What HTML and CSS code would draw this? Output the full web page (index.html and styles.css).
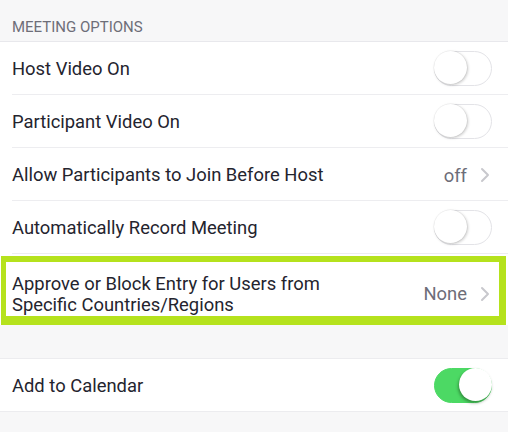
FILE: index.html
```html
<!DOCTYPE html>
<html>
<head>
<meta charset="utf-8">
<link rel="stylesheet" href="styles.css">
</head>
<body>
<div class="section-header">MEETING OPTIONS</div>
<div class="group">
  <div class="row">
    <span class="label">Host Video On</span>
    <span class="toggle"><span class="knob"></span></span>
  </div>
  <div class="row">
    <span class="label">Participant Video On</span>
    <span class="toggle"><span class="knob"></span></span>
  </div>
  <div class="row">
    <span class="label">Allow Participants to Join Before Host</span>
    <span class="value">off<svg class="chev" width="10" height="16" viewBox="0 0 10 16"><path d="M2 2 L8 8 L2 14" fill="none" stroke="#c8c8cd" stroke-width="2" stroke-linecap="round" stroke-linejoin="round"/></svg></span>
  </div>
  <div class="row">
    <span class="label">Automatically Record Meeting</span>
    <span class="toggle"><span class="knob"></span></span>
  </div>
  <div class="row row-tall highlighted">
    <span class="label two-line">Approve or Block Entry for Users from<br>Specific Countries/Regions</span>
    <span class="value">None<svg class="chev" width="10" height="16" viewBox="0 0 10 16"><path d="M2 2 L8 8 L2 14" fill="none" stroke="#c8c8cd" stroke-width="2" stroke-linecap="round" stroke-linejoin="round"/></svg></span>
  </div>
</div>
<div class="spacer"></div>
<div class="group group-bordered">
  <div class="row row-last">
    <span class="label">Add to Calendar</span>
    <span class="toggle on"><span class="knob"></span></span>
  </div>
</div>
</body>
</html>
```

FILE: styles.css
```css
html, body {
  margin: 0;
  padding: 0;
  background: #f7f7f8;
  font-family: Roboto, "Liberation Sans", Arial, sans-serif;
}

.section-header {
  height: 42px;
  box-sizing: border-box;
  padding: 18px 12px 0;
  font-size: 15px;
  line-height: 18px;
  color: #6e6e78;
  border-bottom: 1px solid #e8e8ec;
}

.group {
  background: #ffffff;
}

.group-bordered {
  border-top: 1px solid #ececef;
  border-bottom: 1px solid #ececef;
}

.row {
  display: flex;
  align-items: center;
  justify-content: space-between;
  height: 52px;
  margin-left: 12px;
  padding-right: 16px;
  border-bottom: 1px solid #ededf0;
}

.row-last {
  border-bottom: none;
}

.label {
  font-size: 18.4px;
  color: #24242e;
  line-height: 22px;
  padding-top: 2px;
}

.two-line {
  line-height: 21px;
  padding-top: 8px;
}

.row-tall {
  height: 71px;
  margin-left: 0;
  padding-left: 12px;
  border-bottom: none;
  position: relative;
}

.highlighted::after {
  content: "";
  position: absolute;
  left: 1px;
  right: 2px;
  top: 2px;
  bottom: 0;
  border-style: solid;
  border-color: #b5e21d;
  border-width: 6px 7px 9px 5px;
  pointer-events: none;
}

.value {
  display: flex;
  align-items: center;
  font-size: 18.4px;
  color: #6d6d78;
  padding-top: 2px;
}

.row-tall .value {
  padding-top: 8px;
}

.chev {
  margin-left: 13px;
  margin-right: 2px;
}

.toggle {
  position: relative;
  width: 58px;
  height: 35px;
  box-sizing: border-box;
  border-radius: 18px;
  border: 1.5px solid #e3e3e7;
  background: #ffffff;
  flex-shrink: 0;
}

.toggle .knob {
  position: absolute;
  left: -1px;
  top: -1px;
  width: 33px;
  height: 33px;
  border-radius: 50%;
  background: #ffffff;
  box-shadow: 1px 1px 3px rgba(0, 0, 0, 0.22), 0 0 0 0.5px rgba(0, 0, 0, 0.06);
}

.toggle.on {
  background: #4cd964;
  border-color: #4cd964;
}

.toggle.on .knob {
  left: auto;
  right: -1px;
  box-shadow: -1px 2px 3px rgba(20, 60, 20, 0.45);
}

.spacer {
  height: 33px;
}
```
